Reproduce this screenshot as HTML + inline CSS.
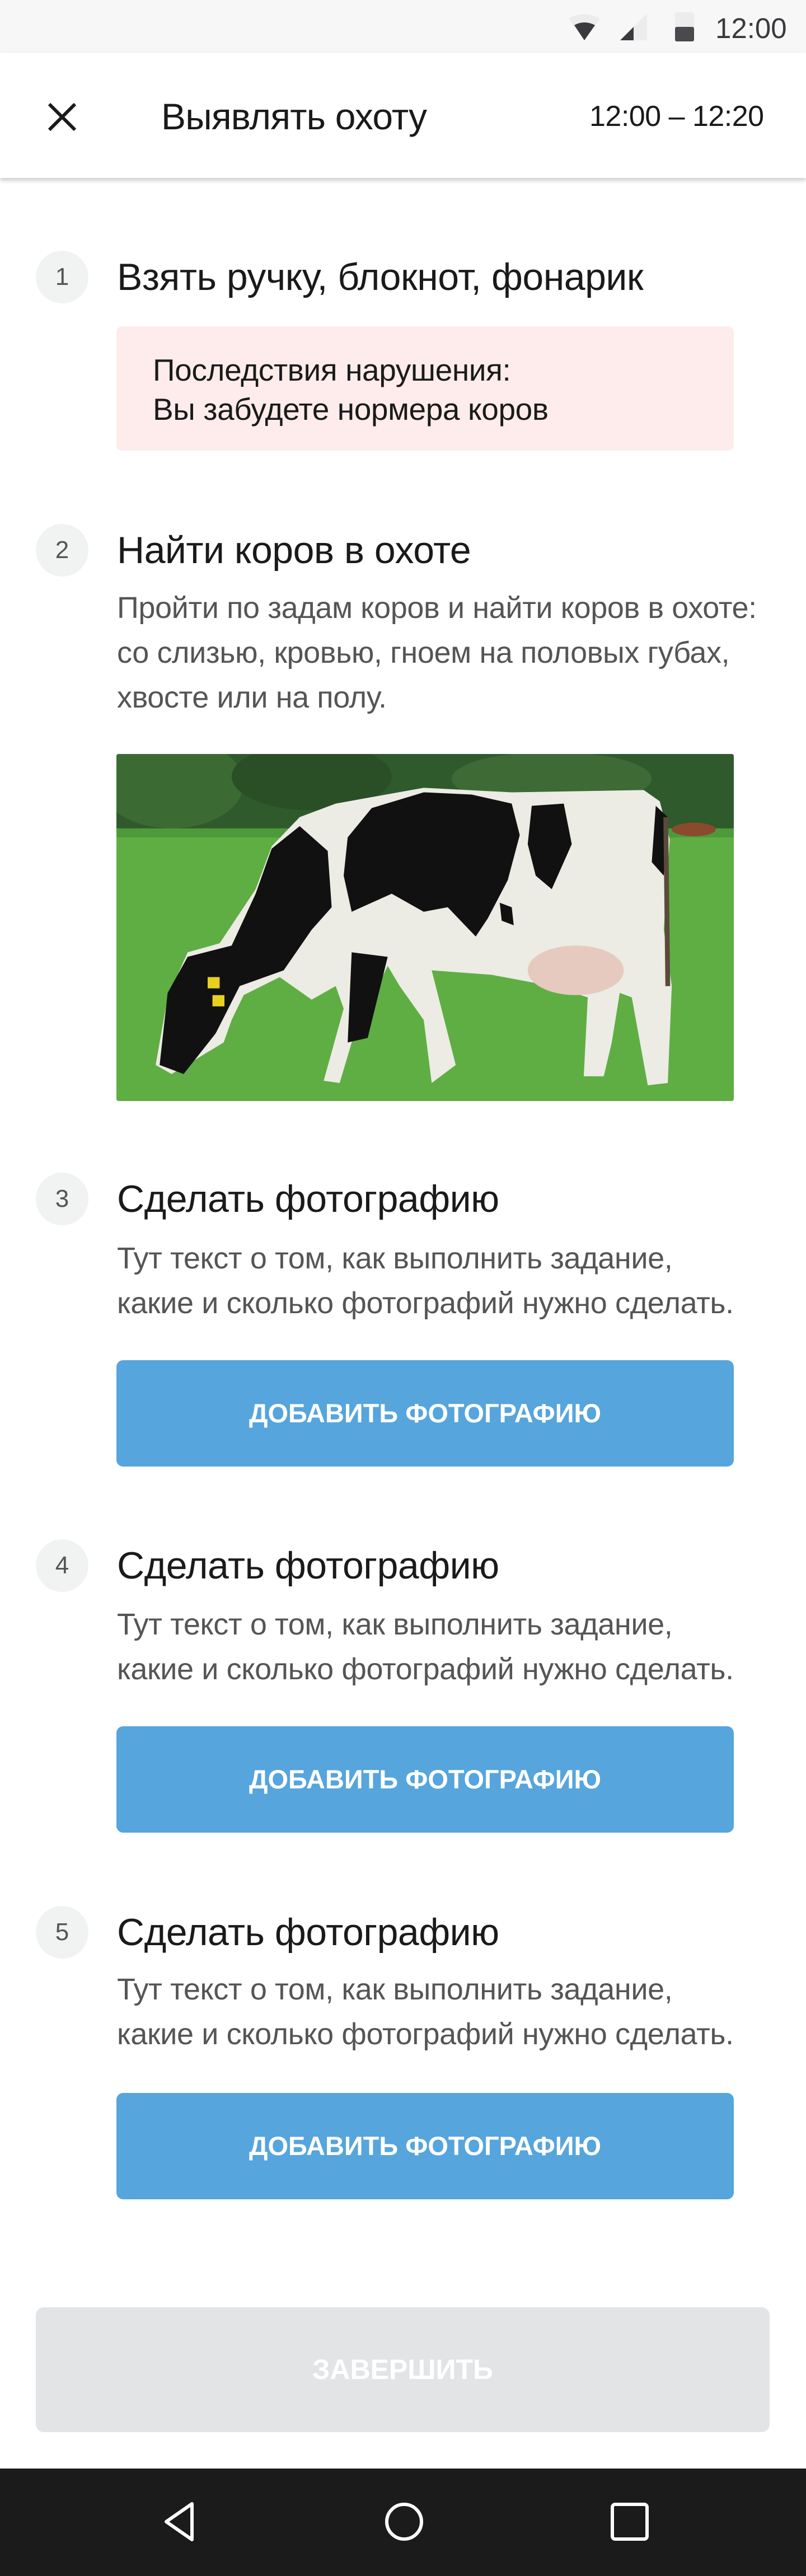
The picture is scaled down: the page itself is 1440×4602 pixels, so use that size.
<!DOCTYPE html>
<html><head><meta charset="utf-8"><style>
*{margin:0;padding:0;box-sizing:border-box}
body{width:1440px;height:4602px;position:relative;background:#fff;font-family:"Liberation Sans",sans-serif;overflow:hidden}
.a{position:absolute;white-space:nowrap}
.circ{position:absolute;left:64px;width:94px;height:94px;border-radius:50%;background:#f1f2f2;color:#555;font-size:44px;line-height:94px;text-align:center}
.tt{position:absolute;left:209px;font-size:68px;color:#1a1a1a;line-height:74px;letter-spacing:-0.5px;white-space:nowrap}
.ds{position:absolute;left:209px;font-size:54px;color:#555;line-height:80px;letter-spacing:-0.4px;white-space:nowrap}
.btn{position:absolute;left:208px;width:1103px;height:190px;background:#56a5dc;border-radius:12px;color:#fff;font-weight:bold;font-size:47px;text-align:center;line-height:190px}
</style></head><body>
<div class="a" style="left:0;top:0;width:1440px;height:94px;background:#f6f7f6"></div>
<svg class="a" style="left:1000px;top:0" width="440" height="94" viewBox="0 0 440 94">
<path d="M16 33 Q44 18 72 33 L44 72 Z" fill="#ececec"/>
<path d="M26 45 Q44 35 63 45 L44 72 Z" fill="#3a3a3e"/>
<path d="M108 72 L156 24 L156 72 Z" fill="#ececec"/>
<path d="M108 72 L132 48 L132 72 Z" fill="#3a3a3e"/>
<rect x="206" y="22" width="34" height="52" rx="3" fill="#ececec"/>
<rect x="206" y="48" width="34" height="26" rx="3" fill="#4a4a4e"/>
<text x="278" y="68" font-size="51" fill="#3a3a3e" font-family="Liberation Sans">12:00</text>
</svg>
<div class="a" style="left:0;top:94px;width:1440px;height:224px;background:#fff;box-shadow:0 4px 8px rgba(0,0,0,0.22)"></div>
<svg class="a" style="left:84px;top:182px" width="54" height="54" viewBox="0 0 54 54"><path d="M4 4L50 50M50 4L4 50" stroke="#1a1a1a" stroke-width="6"/></svg>
<div class="a" style="left:288px;top:170px;font-size:66px;line-height:76px;color:#1a1a1a;letter-spacing:-0.8px">Выявлять охоту</div>
<div class="a" style="left:1053px;top:178px;font-size:52px;line-height:60px;color:#1a1a1a;letter-spacing:-0.5px">12:00 – 12:20</div>

<div class="circ" style="top:448px">1</div>
<div class="tt" style="top:458px">Взять ручку, блокнот, фонарик</div>
<div class="a" style="left:208px;top:583px;width:1103px;height:222px;background:#fdeceb;border-radius:10px"></div>
<div class="a" style="left:273px;top:630px;font-size:55px;line-height:62px;color:#1a1a1a;letter-spacing:-0.4px">Последствия нарушения:</div>
<div class="a" style="left:273px;top:700px;font-size:55px;line-height:62px;color:#1a1a1a;letter-spacing:-0.4px">Вы забудете нормера коров</div>

<div class="circ" style="top:936px">2</div>
<div class="tt" style="top:946px">Найти коров в охоте</div>
<div class="ds" style="top:1046px">Пройти по задам коров и найти коров в охоте:<br>со слизью, кровью, гноем на половых губах,<br>хвосте или на полу.</div>
<svg class="a" style="left:208px;top:1347px;border-radius:4px" width="1103" height="620" viewBox="12 20 1543 1540" preserveAspectRatio="none">
<rect x="0" y="0" width="1600" height="1600" fill="#5fae43"/>
<rect x="0" y="0" width="1600" height="370" fill="#2f5a2c"/>
<ellipse cx="150" cy="150" rx="180" ry="200" fill="#3b6b33"/>
<ellipse cx="500" cy="120" rx="200" ry="150" fill="#2a4f26"/>
<ellipse cx="1100" cy="130" rx="250" ry="120" fill="#3d6a35"/>
<rect x="0" y="350" width="1600" height="40" fill="#4e9a3a"/>
<ellipse cx="1455" cy="355" rx="55" ry="30" fill="#8b4a2e"/>
<path d="M400 430L470 300L560 240L780 170L1000 190L1330 180L1370 230L1395 400L1380 800L1400 1050L1390 1480L1340 1490L1300 1100L1270 1080L1250 1300L1230 1450L1180 1450L1190 1100L1100 1050L950 1000L800 980L860 1400L800 1480L780 1200L720 1050L690 960L600 1300L570 1480L530 1470L580 1150L560 1050L500 1110L420 1010L330 1090L300 1200L280 1300L150 1440L110 1400L140 1100L190 900L270 860L360 620Z" fill="#ecebe4"/>
<ellipse cx="1160" cy="980" rx="120" ry="110" fill="#e6c9bf"/>
<path d="M400 440L470 340L540 450L550 700L500 800L430 980L320 1050L260 1260L180 1440L120 1400L140 1080L190 920L300 870L360 640Z" fill="#111"/>
<path d="M590 390L650 260L780 190L900 200L1000 240L1020 380L990 580L940 750L910 830L840 700L780 720L700 640L600 720L580 560Z" fill="#111"/>
<path d="M1050 250L1130 240L1150 420L1100 620L1060 560L1040 420Z" fill="#111"/>
<path d="M1360 250L1390 300L1380 560L1350 500Z" fill="#111"/>
<path d="M600 900L690 920L640 1280L590 1300Z" fill="#111"/>
<path d="M970 680L1000 700L1005 780L975 760Z" fill="#111"/>
<path d="M1385 300L1390 1050" stroke="#5a4a3a" stroke-width="12"/>
<rect x="240" y="1010" width="30" height="50" fill="#e6d21e"/>
<rect x="252" y="1090" width="30" height="50" fill="#e6d21e"/>
</svg>

<div class="circ" style="top:2095px">3</div>
<div class="tt" style="top:2105px">Сделать фотографию</div>
<div class="ds" style="top:2208px">Тут текст о том, как выполнить задание,<br>какие и сколько фотографий нужно сделать.</div>
<div class="btn" style="top:2430px">ДОБАВИТЬ ФОТОГРАФИЮ</div>

<div class="circ" style="top:2750px">4</div>
<div class="tt" style="top:2760px">Сделать фотографию</div>
<div class="ds" style="top:2862px">Тут текст о том, как выполнить задание,<br>какие и сколько фотографий нужно сделать.</div>
<div class="btn" style="top:3084px">ДОБАВИТЬ ФОТОГРАФИЮ</div>

<div class="circ" style="top:3405px">5</div>
<div class="tt" style="top:3415px">Сделать фотографию</div>
<div class="ds" style="top:3514px">Тут текст о том, как выполнить задание,<br>какие и сколько фотографий нужно сделать.</div>
<div class="btn" style="top:3739px">ДОБАВИТЬ ФОТОГРАФИЮ</div>

<div class="a" style="left:64px;top:4122px;width:1311px;height:223px;background:#e3e4e6;border-radius:14px;color:#fff;font-weight:bold;font-size:50px;text-align:center;line-height:223px">ЗАВЕРШИТЬ</div>

<div class="a" style="left:0;top:4410px;width:1440px;height:192px;background:#1b1b1b"></div>
<svg class="a" style="left:0;top:4410px" width="1440" height="192" viewBox="0 0 1440 192">
<path d="M343 63 L343 127 L297 95 Z" fill="none" stroke="#fff" stroke-width="6" stroke-linejoin="round"/>
<circle cx="722" cy="95" r="31" fill="none" stroke="#fff" stroke-width="6"/>
<rect x="1094" y="64" width="62" height="62" rx="5" fill="none" stroke="#fff" stroke-width="6"/>
</svg>
</body></html>
